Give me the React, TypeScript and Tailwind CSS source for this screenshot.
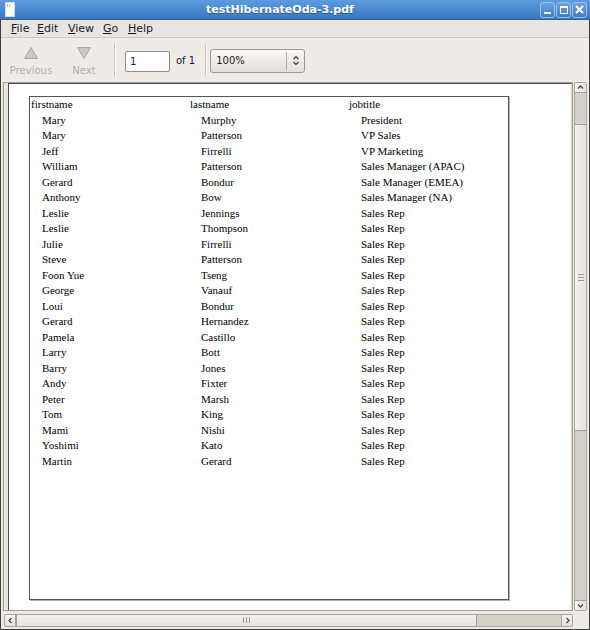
import React from "react";

const rows: [string, string, string][] = [
  ["Mary", "Murphy", "President"],
  ["Mary", "Patterson", "VP Sales"],
  ["Jeff", "Firrelli", "VP Marketing"],
  ["William", "Patterson", "Sales Manager (APAC)"],
  ["Gerard", "Bondur", "Sale Manager (EMEA)"],
  ["Anthony", "Bow", "Sales Manager (NA)"],
  ["Leslie", "Jennings", "Sales Rep"],
  ["Leslie", "Thompson", "Sales Rep"],
  ["Julie", "Firrelli", "Sales Rep"],
  ["Steve", "Patterson", "Sales Rep"],
  ["Foon Yue", "Tseng", "Sales Rep"],
  ["George", "Vanauf", "Sales Rep"],
  ["Loui", "Bondur", "Sales Rep"],
  ["Gerard", "Hernandez", "Sales Rep"],
  ["Pamela", "Castillo", "Sales Rep"],
  ["Larry", "Bott", "Sales Rep"],
  ["Barry", "Jones", "Sales Rep"],
  ["Andy", "Fixter", "Sales Rep"],
  ["Peter", "Marsh", "Sales Rep"],
  ["Tom", "King", "Sales Rep"],
  ["Mami", "Nishi", "Sales Rep"],
  ["Yoshimi", "Kato", "Sales Rep"],
  ["Martin", "Gerard", "Sales Rep"],
];

function Triangle({ down }: { down?: boolean }) {
  return (
    <svg width="16" height="14" viewBox="0 0 16 14">
      <polygon
        points={down ? "1.5,1.5 14.5,1.5 8,12.5" : "8,1.5 14.5,12.5 1.5,12.5"}
        fill="#cbc9c5"
        stroke="#a9a7a3"
        strokeWidth="1"
      />
    </svg>
  );
}

function Chevron({ dir }: { dir: "up" | "down" | "left" | "right" }) {
  const pts = {
    up: "2,5.5 4.5,3 7,5.5",
    down: "2,3.5 4.5,6 7,3.5",
    left: "5.5,2 3,4.5 5.5,7",
    right: "3.5,2 6,4.5 3.5,7",
  }[dir];
  return (
    <svg width="9" height="9" viewBox="0 0 9 9">
      <polyline points={pts} fill="none" stroke="#4a4844" strokeWidth="1.3" />
    </svg>
  );
}

function WinButton({ children }: { children: React.ReactNode }) {
  return (
    <div className="w-[15px] h-[16px] rounded-[3px] border border-[#9fc1ea] bg-linear-to-b from-[#6aa3e3] to-[#3f7cc7] flex items-center justify-center">
      {children}
    </div>
  );
}

export default function App() {
  return (
    <div className="w-[590px] h-[630px] flex flex-col bg-[#edeae5] font-['DejaVu_Sans',sans-serif] text-[#1a1a1a] overflow-hidden">
      {/* title bar */}
      <div className="h-[20px] flex items-center bg-linear-to-b from-[#5e9ce0] to-[#3a76c1] border-b border-[#2f5f9f] shrink-0">
        <div className="w-[20px] pl-[5px] flex items-center">
          <svg width="10" height="15" viewBox="0 0 10 15">
            <rect x="0.5" y="0.5" width="9" height="14" fill="#ffffff" stroke="#d6dce6" />
            <rect x="2" y="2" width="1" height="3" fill="#b9b9b9" />
            <rect x="4" y="2" width="1" height="3" fill="#b9b9b9" />
          </svg>
        </div>
        <div className="flex-1 text-center text-white font-bold text-[11px] pt-[1px] [text-shadow:0_1px_0_#2a5896]">
          testHibernateOda-3.pdf
        </div>
        <div className="flex gap-[1px] pr-[3px]">
          <WinButton>
            <div className="w-[7px] h-[2px] bg-white mt-[7px]" />
          </WinButton>
          <WinButton>
            <div className="w-[8px] h-[8px] border border-white border-t-2" />
          </WinButton>
          <WinButton>
            <svg width="9" height="9" viewBox="0 0 9 9">
              <path d="M1 1 L8 8 M8 1 L1 8" stroke="#fff" strokeWidth="2" />
            </svg>
          </WinButton>
        </div>
      </div>

      <div className="flex-1 flex flex-col border-x border-b border-[#3e3e3e]">
        {/* menu bar */}
        <div className="h-[18px] flex items-center pl-[10px] pt-[2px] bg-[#e8e4df] border-b border-[#cdc8c0] text-[11px] shrink-0">
          <span className="w-[26px]"><span className="underline">F</span>ile</span>
          <span className="w-[31px]"><span className="underline">E</span>dit</span>
          <span className="w-[35px]"><span className="underline">V</span>iew</span>
          <span className="w-[25px]"><span className="underline">G</span>o</span>
          <span><span className="underline">H</span>elp</span>
        </div>

        {/* toolbar */}
        <div className="h-[44px] flex items-center bg-[#efece8] text-[10px] shrink-0">
          <div className="ml-[3px] w-[54px] h-[44px] flex flex-col items-center pt-[8px] text-[#b1aea8]">
            <Triangle />
            <span className="mt-[3px]">Previous</span>
          </div>
          <div className="w-[52px] h-[44px] flex flex-col items-center pt-[8px] text-[#b1aea8]">
            <Triangle down />
            <span className="mt-[3px]">Next</span>
          </div>
          <div className="ml-[4px] w-[2px] h-[32px] border-l border-[#cbc6be] border-r border-r-white" />
          <div className="ml-[9px] mt-[2px] w-[45px] h-[21px] border border-[#8e8a84] rounded-[2px] bg-white flex items-center pl-[4px]">
            1
          </div>
          <span className="ml-[6px]">of 1</span>
          <div className="ml-[10px] w-[2px] h-[32px] border-l border-[#cbc6be] border-r border-r-white" />
          <div className="ml-[3px] mt-[1px] w-[95px] h-[24px] rounded-[3px] border border-[#9b968e] bg-linear-to-b from-[#faf9f7] to-[#e3dfd9] flex items-center">
            <span className="flex-1 pl-[5px]">100%</span>
            <div className="w-[1px] h-[18px] bg-[#b3aea6]" />
            <div className="w-[17px] flex flex-col items-center">
              <svg width="8" height="11" viewBox="0 0 8 11">
                <polyline points="1.5,4 4,1.5 6.5,4" fill="none" stroke="#3c3a37" strokeWidth="1.2" />
                <polyline points="1.5,7 4,9.5 6.5,7" fill="none" stroke="#3c3a37" strokeWidth="1.2" />
              </svg>
            </div>
          </div>
        </div>

        {/* content */}
        <div className="h-[529px] flex pl-[2px] shrink-0">
          <div className="w-[570px] flex border border-[#a09c95] bg-[#e9e6e1] pl-[4px]">
            <div className="flex-1 border-l border-t border-[#505050] border-r border-r-[#d8d4cd] bg-white">
              <div className="ml-[20px] mt-[12px] w-[480px] h-[504px] border border-[#555555] shadow-[1px_1px_0_#b0b0b0] pl-[1px] font-['Liberation_Serif',serif] text-[11px] leading-[15.5px] text-black">
                <div className="grid grid-cols-[159px_159px_159px]">
                  <span>firstname</span>
                  <span>lastname</span>
                  <span>jobtitle</span>
                  {rows.map((r, i) => (
                    <React.Fragment key={i}>
                      <span className="pl-[11px]">{r[0]}</span>
                      <span className="pl-[11px]">{r[1]}</span>
                      <span className="pl-[12px]">{r[2]}</span>
                    </React.Fragment>
                  ))}
                </div>
              </div>
            </div>
          </div>
          {/* vertical scrollbar */}
          <div className="ml-[1px] w-[13px] flex flex-col border border-[#a8a39b] bg-[#d6d1c8] rounded-[2px]">
            <div className="h-[10px] bg-linear-to-r from-[#f6f4f1] to-[#e4e0da] border-b border-[#a8a39b] flex items-center justify-center">
              <Chevron dir="up" />
            </div>
            <div className="h-[31px]" />
            <div className="h-[307px] bg-linear-to-r from-[#f4f2ee] to-[#e6e2dc] border-y border-[#a29d95] flex flex-col items-center justify-center gap-[2px]">
              <div className="w-[6px] h-[1px] bg-[#9e998f]" />
              <div className="w-[6px] h-[1px] bg-[#9e998f]" />
              <div className="w-[6px] h-[1px] bg-[#9e998f]" />
            </div>
            <div className="flex-1" />
            <div className="h-[10px] bg-linear-to-r from-[#f6f4f1] to-[#e4e0da] border-t border-[#a8a39b] flex items-center justify-center">
              <Chevron dir="down" />
            </div>
          </div>
        </div>

        {/* horizontal scrollbar */}
        <div className="flex-1 flex items-center pl-[3px]">
          <div className="w-[569px] h-[13px] flex border border-[#a8a39b] bg-[#d6d1c8] rounded-[2px]">
            <div className="w-[11px] bg-linear-to-b from-[#f6f4f1] to-[#e4e0da] border-r border-[#a8a39b] flex items-center justify-center">
              <Chevron dir="left" />
            </div>
            <div className="w-[461px] bg-linear-to-b from-[#f4f2ee] to-[#e6e2dc] border-x border-[#a29d95] flex items-center justify-center gap-[2px]">
              <div className="w-[1px] h-[6px] bg-[#9e998f]" />
              <div className="w-[1px] h-[6px] bg-[#9e998f]" />
              <div className="w-[1px] h-[6px] bg-[#9e998f]" />
            </div>
            <div className="flex-1" />
            <div className="w-[11px] bg-linear-to-b from-[#f6f4f1] to-[#e4e0da] border-l border-[#a8a39b] flex items-center justify-center">
              <Chevron dir="right" />
            </div>
          </div>
        </div>
      </div>
    </div>
  );
}
